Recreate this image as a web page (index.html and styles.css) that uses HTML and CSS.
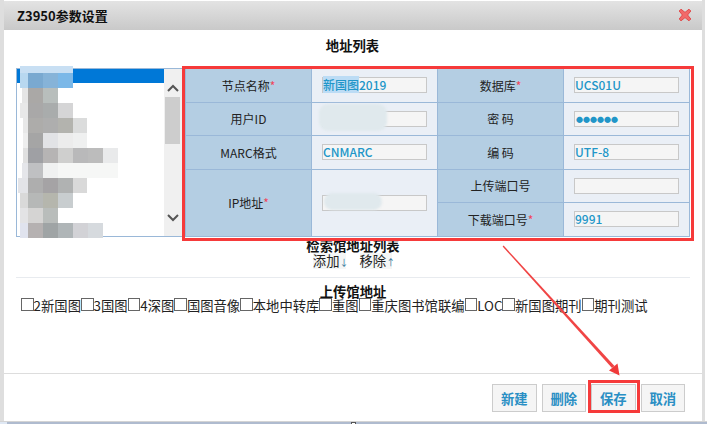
FILE: index.html
```html
<!DOCTYPE html>
<html lang="zh">
<head>
<meta charset="utf-8">
<title>Z3950参数设置</title>
<link rel="stylesheet" href="styles.css">
</head>
<body>
<div class="dialog">
  <header class="titlebar">
    <span class="title">Z3950参数设置</span>
    <svg class="close" width="14" height="14" viewBox="0 0 14 14"><path d="M3 1.2 7 4.4 11 1.2 12.8 3 9.6 7 12.8 11 11 12.8 7 9.6 3 12.8 1.2 11 4.4 7 1.2 3Z" fill="#f26a6a" stroke="#e04a4a" stroke-width="1"/></svg>
  </header>
  <main class="content">
    <h2 class="heading heading-top">地址列表</h2>
    <div class="editor">
      <div class="listbox">
        <div class="list-items"><div class="selected"></div></div>
        <div class="scrollbar">
          <svg class="arrow" width="12" height="8" viewBox="0 0 12 8"><path d="M1 7 6 2 11 7" fill="none" stroke="#555" stroke-width="2"/></svg>
          <div class="track"><div class="thumb"></div></div>
          <svg class="arrow" width="12" height="8" viewBox="0 0 12 8"><path d="M1 1 6 6 11 1" fill="none" stroke="#555" stroke-width="2"/></svg>
        </div>
      </div>
      <table class="form">
        <tr>
          <th>节点名称<i>*</i></th>
          <td><div class="field"><mark>新国图</mark>2019</div></td>
          <th>数据库<i>*</i></th>
          <td><div class="field">UCS01U</div></td>
        </tr>
        <tr>
          <th>用户ID</th>
          <td><div class="field"></div></td>
          <th>密 码</th>
          <td><div class="field dots">●●●●●●</div></td>
        </tr>
        <tr>
          <th>MARC格式</th>
          <td><div class="field">CNMARC</div></td>
          <th>编 码</th>
          <td><div class="field">UTF-8</div></td>
        </tr>
        <tr>
          <th rowspan="2">IP地址<i>*</i></th>
          <td rowspan="2"><div class="field"></div></td>
          <th>上传端口号</th>
          <td><div class="field"></div></td>
        </tr>
        <tr>
          <th>下载端口号<i>*</i></th>
          <td><div class="field">9991</div></td>
        </tr>
      </table>
    </div>
    <h2 class="heading heading-search">检索馆地址列表</h2>
    <div class="links"><span class="link">添加<span class="arr">↓</span></span><span class="link">移除<span class="arr">↑</span></span></div>
    <hr class="rule">
    <h2 class="heading heading-upload">上传馆地址</h2>
    <div class="checks">
      <label class="check"><span class="box"></span>2新国图</label>
      <label class="check"><span class="box"></span>3国图</label>
      <label class="check"><span class="box"></span>4深图</label>
      <label class="check"><span class="box"></span>国图音像</label>
      <label class="check"><span class="box"></span>本地中转库</label>
      <label class="check"><span class="box"></span>重图</label>
      <label class="check"><span class="box"></span>重庆图书馆联编</label>
      <label class="check"><span class="box"></span>LOC</label>
      <label class="check"><span class="box"></span>新国图期刊</label>
      <label class="check"><span class="box"></span>期刊测试</label>
    </div>
  </main>
  <footer class="actions">
    <button class="btn">新建</button>
    <button class="btn">删除</button>
    <button class="btn">保存</button>
    <button class="btn">取消</button>
  </footer>
</div>
<div class="bottom-strip"><span class="strip-start"></span><span class="strip-tab"></span></div>

<svg class="mosaic" width="120" height="172" viewBox="16 66 120 172" shape-rendering="crispEdges">
  <rect x="20" y="66" width="53" height="7" fill="#c8dff3"/>
  <rect x="20" y="73" width="8" height="15" fill="#b8d8f0"/><rect x="28" y="73" width="15" height="15" fill="#7aa9d0"/><rect x="43" y="73" width="15" height="15" fill="#86b3d8"/><rect x="58" y="73" width="15" height="15" fill="#7bb8e8"/>
  <rect x="22" y="88" width="6" height="15" fill="#e5e5e5"/><rect x="28" y="88" width="15" height="15" fill="#aaa8a6"/><rect x="43" y="88" width="15" height="15" fill="#b8bebc"/>
  <rect x="20" y="103" width="8" height="15" fill="#e8e8e8"/><rect x="28" y="103" width="15" height="15" fill="#a9a8a8"/><rect x="43" y="103" width="15" height="15" fill="#a9acac"/><rect x="58" y="103" width="15" height="15" fill="#d5d5d6"/>
  <rect x="23" y="118" width="5" height="15" fill="#e8e8e8"/><rect x="28" y="118" width="15" height="15" fill="#adacaa"/><rect x="43" y="118" width="15" height="15" fill="#aeaeae"/><rect x="58" y="118" width="15" height="15" fill="#b3b3ae"/><rect x="73" y="118" width="14" height="15" fill="#dbdcdc"/>
  <rect x="23" y="133" width="5" height="15" fill="#eeeeee"/><rect x="28" y="133" width="15" height="15" fill="#a5a5a5"/><rect x="43" y="133" width="15" height="15" fill="#e2e3e6"/><rect x="58" y="133" width="15" height="15" fill="#ececec"/><rect x="73" y="133" width="14" height="15" fill="#eff0f0"/>
  <rect x="23" y="148" width="5" height="15" fill="#e0e0e0"/><rect x="28" y="148" width="15" height="15" fill="#9fa0a4"/><rect x="43" y="148" width="15" height="15" fill="#b6b4b4"/><rect x="58" y="148" width="15" height="15" fill="#cfcfce"/><rect x="73" y="148" width="15" height="15" fill="#b9b9ba"/><rect x="88" y="148" width="15" height="15" fill="#bcbcbc"/><rect x="103" y="148" width="15" height="15" fill="#e9eaeb"/>
  <rect x="22" y="163" width="6" height="15" fill="#e5e6ea"/><rect x="28" y="163" width="15" height="15" fill="#bfc0c2"/><rect x="43" y="163" width="15" height="15" fill="#f0f1f1"/><rect x="58" y="163" width="60" height="15" fill="#f6f7f6"/>
  <rect x="18" y="178" width="10" height="15" fill="#e3e4e8"/><rect x="28" y="178" width="15" height="15" fill="#aeaeae"/><rect x="43" y="178" width="15" height="15" fill="#a5a3a5"/><rect x="58" y="178" width="15" height="15" fill="#b0b2b2"/><rect x="73" y="178" width="14" height="15" fill="#d9d9d9"/>
  <rect x="20" y="193" width="8" height="15" fill="#d9d9d9"/><rect x="28" y="193" width="15" height="15" fill="#b6b8b7"/><rect x="43" y="193" width="15" height="15" fill="#b5b6ad"/><rect x="58" y="193" width="15" height="15" fill="#c8cdcf"/>
  <rect x="20" y="208" width="8" height="15" fill="#e3e3e5"/><rect x="28" y="208" width="15" height="15" fill="#d5d4d3"/><rect x="43" y="208" width="15" height="15" fill="#b9bdbb"/>
  <rect x="20" y="223" width="8" height="15" fill="#e0e3ee"/><rect x="28" y="223" width="15" height="15" fill="#b5b1b1"/><rect x="43" y="223" width="15" height="15" fill="#9fa4a5"/><rect x="58" y="223" width="15" height="15" fill="#afb5b7"/><rect x="73" y="223" width="15" height="15" fill="#d2d2d6"/><rect x="88" y="223" width="15" height="15" fill="#d6dade"/>
</svg>
<div class="smudge smudge-user"></div>
<div class="smudge smudge-ip"></div>

<div class="callout callout-form"></div>
<div class="callout callout-save"></div>
<svg class="pointer" width="707" height="424" viewBox="0 0 707 424">
  <path d="M502.6 246.4 L503.6 245.6 L614.5 366 L612 368 Z" fill="#f04545"/>
  <path d="M619.5 375.5 L609 370.5 L617.5 363.5Z" fill="#f03a3a"/>
</svg>
</body>
</html>
```
FILE: styles.css
```css
* { box-sizing: border-box; }
html, body { margin: 0; height: 100%; }
body {
  width: 707px;
  height: 424px;
  position: relative;
  overflow: hidden;
  background: #fff;
  font-family: "Noto Sans CJK SC", "Liberation Sans", sans-serif;
  font-size: 13.33px;
  color: #111;
}
.dialog {
  width: 705px;
  height: 421px;
  border-left: 4px solid #dedede;
  border-right: 3px solid #dedede;
  padding-top: 1px;
  display: flex;
  flex-direction: column;
  background: #fff;
}
.titlebar {
  height: 29px;
  flex: none;
  background: linear-gradient(#e3e3e3, #c9c9c9);
  display: flex;
  align-items: center;
  justify-content: space-between;
  padding: 0 10px 0 13px;
}
.title { font-weight: 700; font-size: 13px; line-height: 29px; }
.close { margin-top: -1px; }
.content { flex: 1; min-height: 0; display: flex; flex-direction: column; }
.heading { margin: 0; font-size: 13.33px; font-weight: 700; line-height: 16px; text-align: center; color: #111; }
.heading-top { padding: 8px 0 0; height: 38px; margin-left: -1px; }
.editor { display: flex; align-items: flex-start; padding-left: 12px; height: 169px; }
.listbox {
  width: 166px;
  height: 169px;
  border: 1px solid #9ab8d8;
  border-right: none;
  display: flex;
  flex: none;
}
.list-items { flex: 1; background: #fff; }
.selected { height: 14px; background: #0078d7; }
.scrollbar {
  width: 18px;
  background: #f0f0f0;
  display: flex;
  flex-direction: column;
  align-items: center;
  padding: 15px 0 14px;
}
.track { flex: 1; width: 100%; padding: 5px 2px 0 1px; }
.thumb { height: 47px; background: #cdcdcd; }
.arrow { flex: none; }
.form {
  margin-left: 3px;
  width: 505px;
  height: 168px;
  border-collapse: collapse;
  table-layout: fixed;
  background: #eaeff6;
  border: 1px solid #9ab8d8;
}
.form th, .form td { border: 1px solid #9ab8d8; padding: 0; }
.form tr { height: 33.5px; }
.form th { background: #b4cee3; font-weight: 400; font-size: 12px; text-align: center; color: #222; width: 126px; }
.form td { width: 126px; padding-left: 10px; }
.form i { color: #f0455a; font-style: normal; }
.field {
  width: 105px;
  height: 16px;
  border: 1px solid #c8c8c8;
  background: #f5f5f5;
  color: #2196c8;
  font-size: 12px;
  font-weight: 500;
  line-height: 14px;
  white-space: nowrap;
}
.field mark { background: #bcdcf5; color: #2196c8; }
.dots { font-size: 7px; padding-left: 1px; }
.heading-search { margin-top: 2px; height: 14px; line-height: 14px; }
.links { display: flex; justify-content: center; gap: 14px; height: 16px; line-height: 16px; margin-left: -1px; font-size: 13.33px; }
.link { background: #f4f6f6; color: #222; }
.arr { display: inline-block; width: 6px; font-size: 9px; text-align: center; color: #2a6f96; }
.rule { margin: 8px 0 0 12px; width: 674px; height: 1px; border: 0; background: #e8ebef; }
.heading-upload { margin-top: 6px; height: 14px; line-height: 15px; }
.checks { display: flex; padding: 0 0 0 17px; height: 16px; line-height: 16px; white-space: nowrap; }
.check { display: flex; align-items: flex-start; font-size: 13.33px; color: #222; }
.box { width: 12.6px; height: 13px; border: 1px solid #666; background: #fff; flex: none; }
.actions {
  flex: none;
  height: 48px;
  border-top: 1px solid #ddd;
  display: flex;
  justify-content: flex-end;
  gap: 5px;
  padding: 10px 17px 0 0;
}
.btn {
  width: 44.5px;
  height: 28px;
  border: 1px solid #ccc;
  background: #f5f5f5;
  color: #2a8fc4;
  font: 700 13.33px "Noto Sans CJK SC", sans-serif;
  padding: 0;
}
.bottom-strip { position: absolute; left: 0; top: 421px; width: 707px; height: 3px; background: #afbbcf; border-top: 1px solid #d4d4d4; }
.strip-start { position: absolute; left: 0; top: 0; width: 7px; height: 2px; background: #dfe8f4; }
.strip-tab { position: absolute; left: 351px; top: 0; width: 5px; height: 2px; background: #fff; border: 1px solid #555; border-bottom: 0; }
.mosaic { position: absolute; left: 16px; top: 66px; filter: blur(0.4px); }
.smudge { position: absolute; background: #e0e9ed; filter: blur(1px); border-radius: 9px; }
.smudge-user { left: 319px; top: 104px; width: 68px; height: 27px; }
.smudge-ip { left: 324px; top: 193px; width: 58px; height: 17px; }
.callout { position: absolute; border: 3px solid #f63a3a; }
.callout-form { left: 182px; top: 66px; width: 512px; height: 175px; }
.callout-save { left: 588px; top: 380px; width: 52px; height: 33px; }
.pointer { position: absolute; left: 0; top: 0; pointer-events: none; }
```
